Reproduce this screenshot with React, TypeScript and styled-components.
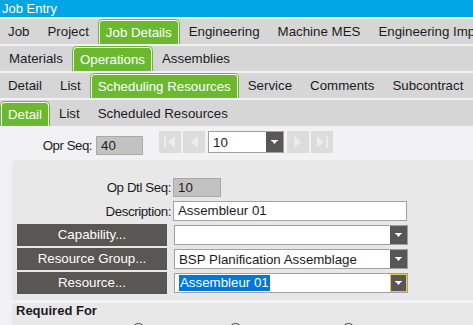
import styled, { createGlobalStyle } from 'styled-components';

const GlobalStyle = createGlobalStyle`
    body {
        margin: 0;
        background: #f2f2f4;
        font-family: "Liberation Sans", Arial, sans-serif;
        font-size: 13.3px;
        color: #1b1b1f;
        overflow: hidden;
    }
    #root {
        width: 473px;
        height: 325px;
        overflow: hidden;
    }
`;

const Window = styled.div`
    display: flex;
    flex-direction: column;
    width: 473px;
    height: 325px;
    background: #f2f2f4;
`;

const TitleBar = styled.div`
    height: 17px;
    line-height: 17px;
    padding-left: 2px;
    background: #00a6e6;
    color: #fff;
    font-size: 13px;
    margin-bottom: 2px;
`;

const TabRow = styled.div<{ $pad?: number; $tall?: boolean }>`
    display: flex;
    align-items: flex-end;
    gap: 2px;
    height: ${p => (p.$tall ? 26 : 25)}px;
    padding-left: ${p => p.$pad ?? 0}px;
    background: #d6d6d6;
    margin-bottom: 2px;
    white-space: nowrap;
    overflow: hidden;
    flex-shrink: 0;
`;

const Tab = styled.div<{ $active?: boolean }>`
    display: flex;
    align-items: center;
    height: ${p => (p.$active ? 23 : 25)}px;
    padding: 0 ${p => (p.$active ? 6 : 8)}px;
    color: ${p => (p.$active ? '#fff' : '#1b1b1f')};
    background: ${p => (p.$active ? '#6cb92f' : 'transparent')};
    border: ${p => (p.$active ? '1px solid #f4fbef' : 'none')};
    border-bottom: none;
    border-radius: 4px 4px 0 0;
    box-shadow: ${p => (p.$active ? '0 0 0 1px #6cb92f' : 'none')};
    margin-top: 1px;
    flex-shrink: 0;
`;

const NavRow = styled.div`
    display: flex;
    align-items: flex-start;
    height: 32px;
    flex-shrink: 0;
`;

const SeqLabel = styled.div<{ $width: number }>`
    width: ${p => p.$width}px;
    text-align: right;
    margin-top: 8px;
    line-height: 19px;
    letter-spacing: -0.5px;
`;

const Field = styled.div<{ $width: number; $readonly?: boolean; $top?: number; $left?: number }>`
    box-sizing: border-box;
    width: ${p => p.$width}px;
    height: ${p => (p.$readonly ? 19 : 20)}px;
    margin-top: ${p => p.$top ?? 0}px;
    margin-left: ${p => p.$left ?? 0}px;
    padding-left: 4px;
    line-height: ${p => (p.$readonly ? 17 : 18)}px;
    background: ${p => (p.$readonly ? '#c2c2c2' : '#fff')};
    border: 1px solid ${p => (p.$readonly ? '#a9a9a9' : '#a3a3a3')};
    white-space: nowrap;
    overflow: hidden;
`;

const NavGroup = styled.div`
    display: flex;
    gap: 2px;
    margin-left: 16px;
    margin-top: 3px;
`;

const NavButton = styled.div`
    display: flex;
    width: 22px;
    height: 22px;
    background: #dcdcdc;
`;

const Combo = styled.div<{ $width: number; $height?: number }>`
    box-sizing: border-box;
    display: flex;
    width: ${p => p.$width}px;
    height: ${p => p.$height ?? 20}px;
    background: #fff;
    border: 1px solid #a0a0a0;
    margin: 0 1px;
`;

const ComboText = styled.div`
    flex: 1;
    padding-left: 4px;
    display: flex;
    align-items: center;
    white-space: nowrap;
    overflow: hidden;
`;

const Selected = styled.span`
    background: #0078d7;
    color: #fff;
    padding: 0 1px;
    line-height: 16px;
`;

const DropButton = styled.div<{ $focus?: boolean }>`
    display: flex;
    align-items: center;
    justify-content: center;
    width: 17px;
    background: #595654;
    box-shadow: ${p => (p.$focus ? 'inset 0 0 0 1px #e9c34a' : 'none')};
`;

const Panel = styled.div`
    margin-left: 12px;
    background: #e8e8e8;
    border-top-left-radius: 5px;
    flex-shrink: 0;
`;

const FormGrid = styled.div`
    display: grid;
    grid-template-columns: 154px 234px;
    grid-auto-rows: 20px;
    column-gap: 2px;
    row-gap: 4px;
    align-items: center;
    padding: 17px 0 7px 5px;
`;

const Label = styled.div`
    justify-self: end;
    white-space: nowrap;
    letter-spacing: -0.4px;
`;

const LinkButton = styled.div`
    box-sizing: border-box;
    width: 150px;
    height: 22px;
    line-height: 22px;
    text-align: center;
    background: #595654;
    color: #fff;
    justify-self: start;
`;

const RequiredPanel = styled(Panel)`
    margin-top: 3px;
    flex: 1;
    padding-left: 4px;
`;

const SectionTitle = styled.div`
    font-weight: bold;
    font-size: 13px;
    line-height: 16px;
`;

const RadioRow = styled.div`
    display: flex;
    margin-top: 4px;
`;

const Radio = styled.div<{ $left: number }>`
    width: 11px;
    height: 11px;
    border: 1px solid #3a3a3a;
    border-radius: 50%;
    background: #fff;
    margin-left: ${p => p.$left}px;
`;

const Arrow = () => (
    <svg width="7" height="5" viewBox="0 0 7 5">
        <rect x="0" y="0" width="7" height="1" fill="#fff" />
        <polygon points="1,1 6,1 3.5,4" fill="#fff" />
    </svg>
);

const NavIcon = ({ kind }: { kind: 'first' | 'prev' | 'next' | 'last' }) => (
    <svg width="22" height="22" viewBox="0 0 22 22">
        {kind === 'first' && <rect x="5" y="5" width="2" height="12" fill="#ececec" />}
        {kind === 'first' && <polygon points="16,5 16,17 9,11" fill="#ececec" />}
        {kind === 'prev' && <polygon points="15,5 15,17 8,11" fill="#ececec" />}
        {kind === 'next' && <polygon points="7,5 7,17 14,11" fill="#ececec" />}
        {kind === 'last' && <polygon points="6,5 6,17 13,11" fill="#ececec" />}
        {kind === 'last' && <rect x="15" y="5" width="2" height="12" fill="#ececec" />}
    </svg>
);

const App = () => {
    return (
        <>
            <GlobalStyle />
            <Window>
                <TitleBar>Job Entry</TitleBar>
                <TabRow>
                    <Tab>Job</Tab>
                    <Tab>Project</Tab>
                    <Tab $active>Job Details</Tab>
                    <Tab>Engineering</Tab>
                    <Tab>Machine MES</Tab>
                    <Tab>Engineering Impo</Tab>
                </TabRow>
                <TabRow $pad={1}>
                    <Tab>Materials</Tab>
                    <Tab $active>Operations</Tab>
                    <Tab>Assemblies</Tab>
                </TabRow>
                <TabRow>
                    <Tab>Detail</Tab>
                    <Tab>List</Tab>
                    <Tab $active>Scheduling Resources</Tab>
                    <Tab>Service</Tab>
                    <Tab>Comments</Tab>
                    <Tab>Subcontract</Tab>
                </TabRow>
                <TabRow $tall $pad={1}>
                    <Tab $active>Detail</Tab>
                    <Tab>List</Tab>
                    <Tab>Scheduled Resources</Tab>
                </TabRow>
                <NavRow>
                    <SeqLabel $width={92}>Opr Seq:</SeqLabel>
                    <Field $width={47} $readonly $top={8} $left={4}>40</Field>
                    <NavGroup>
                        <NavButton><NavIcon kind="first" /></NavButton>
                        <NavButton><NavIcon kind="prev" /></NavButton>
                        <Combo $width={76} $height={22}>
                            <ComboText>10</ComboText>
                            <DropButton><Arrow /></DropButton>
                        </Combo>
                        <NavButton><NavIcon kind="next" /></NavButton>
                        <NavButton><NavIcon kind="last" /></NavButton>
                    </NavGroup>
                </NavRow>
                <Panel>
                    <FormGrid>
                        <Label>Op Dtl Seq:</Label>
                        <Field $width={48} $readonly>10</Field>
                        <Label>Description:</Label>
                        <Field $width={234}>Assembleur 01</Field>
                        <LinkButton>Capability...</LinkButton>
                        <Combo $width={234}>
                            <ComboText />
                            <DropButton><Arrow /></DropButton>
                        </Combo>
                        <LinkButton>Resource Group...</LinkButton>
                        <Combo $width={234}>
                            <ComboText>BSP Planification Assemblage</ComboText>
                            <DropButton><Arrow /></DropButton>
                        </Combo>
                        <LinkButton>Resource...</LinkButton>
                        <Combo $width={234}>
                            <ComboText><Selected>Assembleur 01</Selected></ComboText>
                            <DropButton $focus><Arrow /></DropButton>
                        </Combo>
                    </FormGrid>
                </Panel>
                <RequiredPanel>
                    <SectionTitle>Required For</SectionTitle>
                    <RadioRow>
                        <Radio $left={116} />
                        <Radio $left={84} />
                        <Radio $left={100} />
                    </RadioRow>
                </RequiredPanel>
            </Window>
        </>
    );
};

export default App;
